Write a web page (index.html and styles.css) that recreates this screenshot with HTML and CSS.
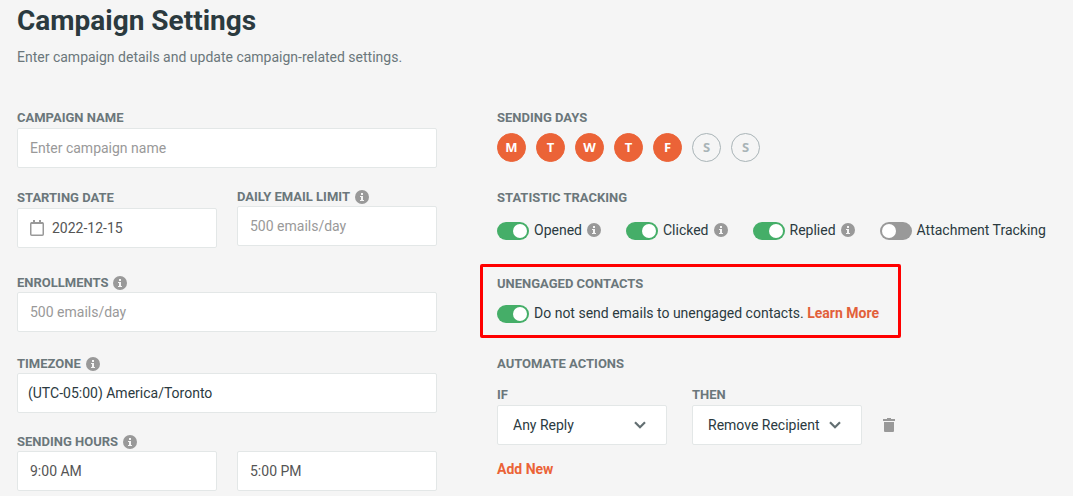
FILE: index.html
```html
<!DOCTYPE html>
<html lang="en">
<head>
    <meta charset="UTF-8">
    <meta name="viewport" content="width=device-width, initial-scale=1.0">
    <title>Campaign Settings</title>
    <link rel="stylesheet" href="styles.css">
</head>
<body>
    <svg class="sprite" aria-hidden="true">
        <symbol id="info" viewBox="0 0 14 14">
            <circle cx="7" cy="7" r="7" fill="#999"/>
            <path d="M6 3h2v2H6zM5 6h3v4h1v1H5v-1h1V7H5z" fill="#f5f5f5"/>
        </symbol>
        <symbol id="chevron" viewBox="0 0 12 8">
            <path d="M1 1.200l5 5 5-5" fill="none" stroke="#636f72" stroke-width="2.200"/>
        </symbol>
    </svg>

    <header class="page-header">
        <h1>Campaign Settings</h1>
        <p>Enter campaign details and update campaign-related settings.</p>
    </header>

    <form class="settings">
        <div class="column">
            <div class="field">
                <label class="title" for="campaignName">Campaign Name</label>
                <input type="text" id="campaignName" placeholder="Enter campaign name">
            </div>

            <div class="field pair date-row">
                <div>
                    <label class="title" for="startDate">Starting Date</label>
                    <div class="date-box">
                        <svg width="14" height="16" viewBox="0 0 14 16">
                            <rect x="0.750" y="2.750" width="12.500" height="12.500" rx="1" fill="none" stroke="#999" stroke-width="1.500"/>
                            <path d="M1 2h12v2H1zM3 0h2v3H3zM9 0h2v3H9z" fill="#999"/>
                        </svg>
                        <input type="text" id="startDate" value="2022-12-15">
                    </div>
                </div>
                <div>
                    <label class="title has-info" for="dailyLimit">Daily Email Limit <svg class="info"><use href="#info"/></svg></label>
                    <input type="text" id="dailyLimit" placeholder="500 emails/day">
                </div>
            </div>

            <div class="field enrollments">
                <label class="title has-info" for="enrollments">Enrollments <svg class="info"><use href="#info"/></svg></label>
                <input type="text" id="enrollments" placeholder="500 emails/day">
            </div>

            <div class="field">
                <label class="title has-info" for="timezone">Timezone <svg class="info"><use href="#info"/></svg></label>
                <select id="timezone" class="timezone">
                    <option>(UTC-05:00) America/Toronto</option>
                </select>
            </div>

            <div class="field">
                <label class="title has-info" for="fromHour">Sending Hours <svg class="info"><use href="#info"/></svg></label>
                <div class="pair">
                    <input type="text" id="fromHour" value="9:00 AM">
                    <input type="text" id="toHour" value="5:00 PM" aria-label="Sending hours end">
                </div>
            </div>
        </div>

        <div class="column">
            <section class="days-section">
                <h2 class="title">Sending Days</h2>
                <div class="days">
                    <button type="button" class="day on">M</button>
                    <button type="button" class="day on">T</button>
                    <button type="button" class="day on">W</button>
                    <button type="button" class="day on">T</button>
                    <button type="button" class="day on">F</button>
                    <button type="button" class="day">S</button>
                    <button type="button" class="day">S</button>
                </div>
            </section>

            <section class="tracking-section">
                <h2 class="title">Statistic Tracking</h2>
                <div class="tracking">
                    <div class="option">
                        <input type="checkbox" class="toggle" id="opened" checked>
                        <label for="opened">Opened</label>
                        <svg class="info"><use href="#info"/></svg>
                    </div>
                    <div class="option">
                        <input type="checkbox" class="toggle" id="clicked" checked>
                        <label for="clicked">Clicked</label>
                        <svg class="info"><use href="#info"/></svg>
                    </div>
                    <div class="option">
                        <input type="checkbox" class="toggle" id="replied" checked>
                        <label for="replied">Replied</label>
                        <svg class="info"><use href="#info"/></svg>
                    </div>
                    <div class="option">
                        <input type="checkbox" class="toggle" id="attachment">
                        <label for="attachment">Attachment Tracking</label>
                    </div>
                </div>
            </section>

            <section class="unengaged">
                <h2 class="title">Unengaged Contacts</h2>
                <div class="option">
                    <input type="checkbox" class="toggle" id="unengaged" checked>
                    <span><label for="unengaged">Do not send emails to unengaged contacts.</label> <a href="#">Learn More</a></span>
                </div>
            </section>

            <section class="automate">
                <h2 class="title">Automate Actions</h2>
                <div class="rule">
                    <div>
                        <label class="title" for="ifAction">If</label>
                        <div class="select-box">
                            <select id="ifAction">
                                <option>Any Reply</option>
                            </select>
                            <svg class="chevron"><use href="#chevron"/></svg>
                        </div>
                    </div>
                    <div>
                        <label class="title" for="thenAction">Then</label>
                        <div class="select-box">
                            <select id="thenAction">
                                <option>Remove Recipient</option>
                            </select>
                            <svg class="chevron"><use href="#chevron"/></svg>
                        </div>
                    </div>
                    <button type="button" class="delete" aria-label="Delete rule">
                        <svg width="12" height="14" viewBox="0 0 12 14">
                            <path d="M0 1h4V0h4v1h4v2H0zM1 4h10v9a1 1 0 0 1-1 1H2a1 1 0 0 1-1-1z" fill="#999"/>
                        </svg>
                    </button>
                </div>
                <a href="#" class="add">Add New</a>
            </section>
        </div>
    </form>
</body>
</html>
```

FILE: styles.css
```css
* {
    box-sizing: border-box;
}
body {
    margin: 0;
    padding: 0 16px 5px 17px;
    background-color: #f5f5f5;
    color: #2b3a3f;
    font-family: Roboto, sans-serif;
    font-size: 14px;
    line-height: 20px;
}
.sprite {
    display: none;
}
.page-header {
    padding-top: 5px;
    margin-bottom: 41px;
}
h1 {
    margin: 0 0 10px;
    font-size: 28px;
    line-height: 32px;
    font-weight: 700;
    color: #2b3a3f;
}
.page-header p {
    margin: 0;
    color: #6b777b;
}
.settings {
    display: grid;
    grid-template-columns: 3fr 4fr;
    gap: 60px;
}
.title {
    display: block;
    margin: 0;
    font-size: 13px;
    line-height: 20px;
    font-weight: 700;
    text-transform: uppercase;
    color: #6b777b;
}
.has-info {
    display: flex;
    align-items: center;
    gap: 5px;
    line-height: 18px;
}
.info {
    width: 14px;
    height: 14px;
    flex: none;
}
.field {
    margin-bottom: 20px;
}
.field:last-child {
    margin-bottom: 0;
}
.date-row {
    margin-bottom: 26px;
}
.enrollments {
    margin-bottom: 23px;
}
.pair {
    display: grid;
    grid-template-columns: 1fr 1fr;
    gap: 20px;
}
input[type="text"],
select {
    display: block;
    width: 100%;
    height: 40px;
    padding: 0 12px;
    background-color: #fff;
    border: 1px solid #e3e7e7;
    border-radius: 2px;
    font: inherit;
    color: #555;
}
input::placeholder {
    color: #999;
}
select {
    appearance: none;
    color: #2b3a3f;
    cursor: pointer;
}
select.timezone {
    padding: 0 10px;
}
.date-box {
    display: flex;
    align-items: center;
    gap: 8px;
    height: 40px;
    padding: 0 12px;
    background-color: #fff;
    border: 1px solid #e3e7e7;
    border-radius: 2px;
}
.date-box input[type="text"] {
    flex: 1;
    min-width: 0;
    height: 38px;
    padding: 0;
    border: none;
}

.days {
    display: flex;
    gap: 10px;
    margin-top: 5px;
}
.day {
    width: 29px;
    height: 29px;
    padding: 0 0 2px;
    border: 1px solid #a9b4b7;
    border-radius: 50%;
    background: none;
    font: 700 13px "Open Sans", sans-serif;
    color: #a9b4b7;
    cursor: pointer;
}
.day.on {
    background-color: #eb6337;
    border-color: #eb6337;
    color: #fff;
}
.tracking-section {
    margin-top: 26px;
}
.tracking {
    display: flex;
    gap: 25px;
    margin-top: 12px;
}
.option {
    display: flex;
    align-items: center;
    gap: 5px;
    white-space: nowrap;
}
.toggle {
    appearance: none;
    display: flex;
    flex: none;
    width: 32px;
    height: 18px;
    margin: 2px 0 0;
    padding: 2px;
    border-radius: 9px;
    background-color: #999;
    cursor: pointer;
}
.toggle::before {
    content: "";
    width: 14px;
    height: 14px;
    border-radius: 50%;
    background-color: #fff;
}
.toggle:checked {
    justify-content: flex-end;
    background-color: #45ae68;
}
a {
    color: #e2603a;
    font-weight: 700;
    text-decoration: none;
}
.unengaged {
    width: fit-content;
    margin: 24px 0 0 -17px;
    padding: 7px 19px 12px 14px;
    border: 3px solid #f00;
    border-radius: 2px;
}
.unengaged .option {
    margin-top: 9px;
}

.automate {
    margin-top: 16px;
}
.rule {
    display: flex;
    align-items: flex-end;
    gap: 25px;
    margin: 11px 0 14px;
}
.select-box {
    position: relative;
    width: 170px;
}
.select-box select {
    padding: 0 15px;
}
.chevron {
    position: absolute;
    top: 16px;
    right: 21px;
    width: 12px;
    height: 8px;
    pointer-events: none;
}
.delete {
    display: flex;
    align-items: center;
    height: 40px;
    margin-left: -4px;
    padding: 0;
    border: none;
    background: none;
    cursor: pointer;
}
.add {
    color: #eb6337;
}
```
